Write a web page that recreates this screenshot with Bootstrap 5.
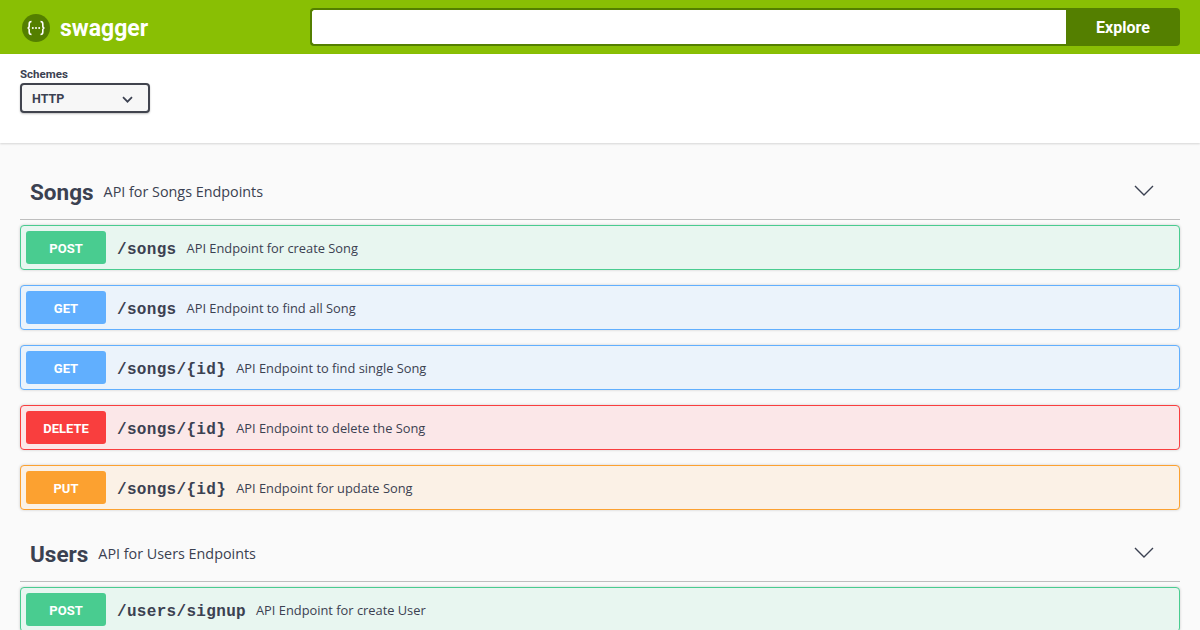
<!DOCTYPE html>
<html lang="en">
<head>
  <meta charset="UTF-8" />
  <title>Swagger UI</title>
  <link href="https://cdn.jsdelivr.net/npm/bootstrap@5.3.0/dist/css/bootstrap.min.css" rel="stylesheet" />
  <style>
    html, body { height: 630px; overflow: hidden; }
    body { background: #fafafa; color: #3b4151; font-family: "Open Sans", sans-serif; }
    .topbar-sw { background: #89bf04; height: 54px; padding: 0 20px; }
    .logo-sw { flex: 0 0 290px; padding-top: 2px; color: #fff; font-family: Roboto, sans-serif; font-size: 23px; font-weight: 700; line-height: 1; }
    .logo-sw svg { margin: 0 10px 0 2px; }
    .search-sw { width: auto; height: 38px; }
    .search-sw .form-control { border: 2px solid #547f00; border-right: 0; border-radius: 4px 0 0 4px; height: 38px; }
    .search-sw .btn { background: #547f00; border: 0; color: #fff; width: 114px; padding: 8px 12px 6px; border-radius: 0 4px 4px 0; font-family: Roboto, sans-serif; font-size: 16px; font-weight: 700; }
    .schemes-sw { background: #fff; height: 89px; padding: 12px 20px 0; box-shadow: 0 1px 2px 0 rgba(0,0,0,.15); }
    .schemes-sw label { display: block; font-family: Roboto, sans-serif; font-size: 11.5px; font-weight: 700; line-height: 17px; }
    .select-sw { width: 130px; height: 30px; padding: 2px 15px 0 10px; border: 2px solid #41444e; border-radius: 4px; background: #f7f7f7; box-shadow: 0 1px 2px 0 rgba(0,0,0,.25); font-family: Roboto, sans-serif; font-size: 12.5px; font-weight: 700; }
    .tag-sw { height: 50px; margin: 0 20px 5px; padding: 0 10px 6px; border-bottom: 1px solid #bebebe; }
    .tag-sw h4 { margin: 2px 10px 0 0; font-family: Roboto, sans-serif; font-size: 22.5px; font-weight: 700; color: #3b4151; }
    .tag-sw small { font-size: 14.35px; }
    .tag-sw svg { margin-bottom: 2px; }
    .op-sw { height: 45px; margin: 0 20px 15px; padding: 0 5px; border: 1px solid; border-radius: 4px; box-shadow: 0 0 3px rgba(0,0,0,.19); }
    .method-sw { width: 80px; height: 33px; padding-top: 2px; border-radius: 3px; color: #fff; font-family: Roboto, sans-serif; font-size: 13px; font-weight: 700; }
    .path-sw { margin: 4px 10px 0 11px; font-family: "Liberation Mono", monospace; font-size: 16px; font-weight: 700; letter-spacing: .32px; }
    .desc-sw { margin-top: 2px; font-size: 12.85px; }
    .op-post { background: #e8f6f0; border-color: #49cc90; }
    .op-post .method-sw { background: #49cc90; }
    .op-get { background: #ebf3fb; border-color: #61affe; }
    .op-get .method-sw { background: #61affe; }
    .op-delete { background: #fbe7e8; border-color: #f93e3e; }
    .op-delete .method-sw { background: #f93e3e; }
    .op-put { background: #fbf1e6; border-color: #fca130; }
    .op-put .method-sw { background: #fca130; }
    .first-tag { margin-top: 27px; }
    .next-tag { margin-top: 22px; }
  </style>
</head>
<body>
  <nav class="topbar-sw d-flex align-items-center">
    <div class="logo-sw d-flex align-items-center">
      <svg width="28" height="28" viewBox="0 0 28 28" aria-hidden="true">
        <circle cx="14" cy="14" r="14" fill="#547f00" />
        <path d="M9.500 7.500c-2 0-2.300 1-2.300 2.500v2c0 1.200-.6 2-1.700 2 1.100 0 1.700.8 1.700 2v2c0 1.500.3 2.500 2.300 2.500M18.500 7.500c2 0 2.300 1 2.300 2.500v2c0 1.200.6 2 1.700 2-1.100 0-1.700.8-1.700 2v2c0 1.500-.3 2.500-2.300 2.500" fill="none" stroke="#fff" stroke-width="1.600" />
        <circle cx="10.800" cy="14" r="1" fill="#fff" />
        <circle cx="14" cy="14" r="1" fill="#fff" />
        <circle cx="17.200" cy="14" r="1" fill="#fff" />
      </svg>
      swagger
    </div>
    <form class="search-sw input-group flex-nowrap flex-grow-1">
      <input class="form-control" type="text" aria-label="Spec URL" />
      <button class="btn" type="button">Explore</button>
    </form>
  </nav>

  <section class="schemes-sw">
    <label>Schemes</label>
    <div class="select-sw d-flex align-items-center justify-content-between">
      HTTP
      <svg width="11" height="7" viewBox="0 0 11 7" aria-hidden="true"><path d="M1 1.200l4.500 4.500L10 1.200" fill="none" stroke="#3b4151" stroke-width="1.700" /></svg>
    </div>
  </section>

  <div id="specs"></div>

  <script>
    const tags = [
      { name: "Songs", about: "API for Songs Endpoints", ops: [
        ["post", "/songs", "API Endpoint for create Song"],
        ["get", "/songs", "API Endpoint to find all Song"],
        ["get", "/songs/{id}", "API Endpoint to find single Song"],
        ["delete", "/songs/{id}", "API Endpoint to delete the Song"],
        ["put", "/songs/{id}", "API Endpoint for update Song"]
      ]},
      { name: "Users", about: "API for Users Endpoints", ops: [
        ["post", "/users/signup", "API Endpoint for create User"]
      ]}
    ];

    const specs = document.getElementById("specs");
    tags.forEach((tag, idx) => {
      let html = `
        <div class="tag-sw d-flex align-items-center ${idx === 0 ? "first-tag" : "next-tag"}">
          <h4>${tag.name}</h4>
          <small>${tag.about}</small>
          <svg class="ms-auto me-3" width="20" height="20" viewBox="0 0 20 20" aria-hidden="true"><path d="M1 5l9 9 9-9" fill="none" stroke="#3b4151" stroke-width="1.400" /></svg>
        </div>`;
      tag.ops.forEach(op => {
        html += `
        <div class="op-sw op-${op[0]} d-flex align-items-center">
          <span class="method-sw d-flex align-items-center justify-content-center">${op[0].toUpperCase()}</span>
          <span class="path-sw">${op[1]}</span>
          <span class="desc-sw">${op[2]}</span>
        </div>`;
      });
      specs.insertAdjacentHTML("beforeend", html);
    });
  </script>
  <script src="https://cdn.jsdelivr.net/npm/bootstrap@5.3.0/dist/js/bootstrap.bundle.min.js"></script>
</body>
</html>
